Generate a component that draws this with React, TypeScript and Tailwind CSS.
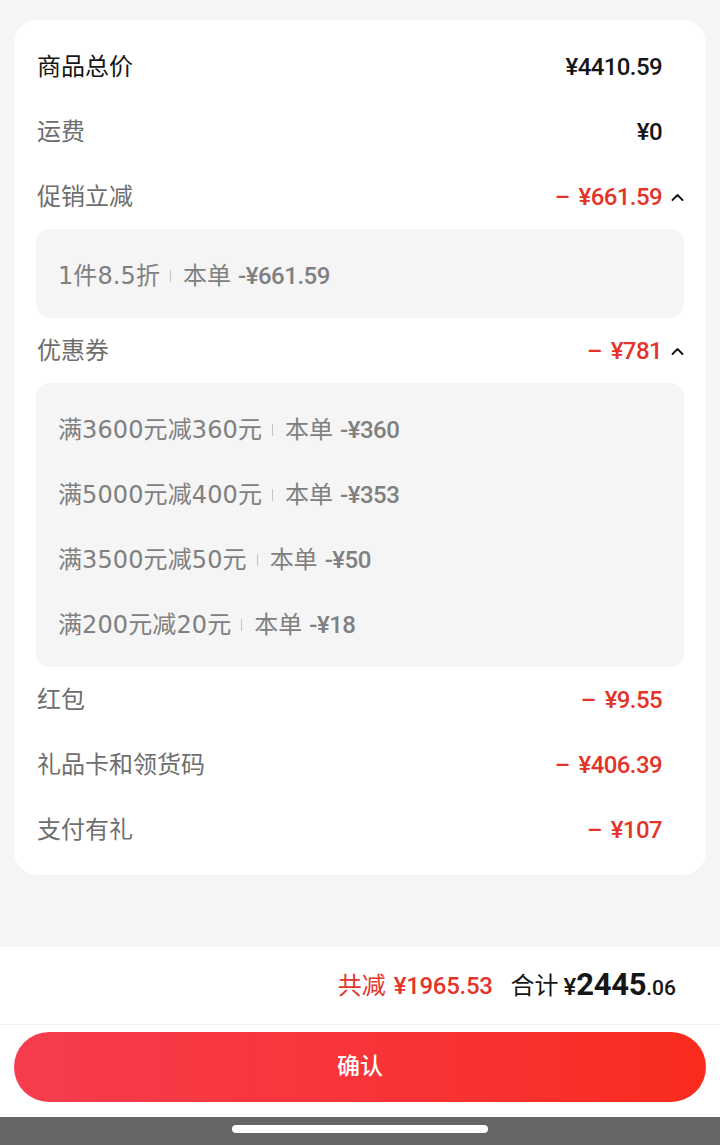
import React from 'react';

const font = { fontFamily: 'Roboto, "Noto Sans CJK SC", sans-serif' };
const ruleFont = { fontFamily: '"DejaVu Sans", "Noto Sans CJK SC", sans-serif' };

function Chevron() {
  return (
    <svg width="13" height="8" viewBox="0 0 13 8" fill="none">
      <polyline points="1.5,7 6.5,2 11.5,7" stroke="#111" strokeWidth="1.8" strokeLinecap="round" strokeLinejoin="round" />
    </svg>
  );
}

function Minus({ amount }: { amount: string }) {
  return (
    <>
      <span>–</span>
      <span className="ml-[9px]">{amount}</span>
    </>
  );
}

function Row({ label, value, red, dark, open }: { label: string; value: string; red?: boolean; dark?: boolean; open?: boolean }) {
  return (
    <div className="h-[65px] flex items-center justify-between pl-[23px] pr-[22px]">
      <span className={`text-[24px] ${dark ? 'text-[#161616]' : 'text-[#6e6e6e]'}`}>{label}</span>
      <div className="flex items-center">
        <span className={`text-[24px] font-medium tracking-[-0.6px] ${red ? 'text-[#e3342a]' : 'text-[#161616]'}`}>
          {red ? <Minus amount={value} /> : value}
        </span>
        <span className="w-[22px] flex justify-end">{open ? <Chevron /> : null}</span>
      </div>
    </div>
  );
}

function Detail({ rule, amount }: { rule: string; amount: string }) {
  return (
    <div className="h-[65px] flex items-center text-[24px] text-[#808080] pt-[4px]">
      <span className="tracking-[0.1px]" style={ruleFont}>{rule}</span>
      <span className="ml-[10px] mr-[12px] w-px h-[12px] bg-[#c4c4c4]" />
      <span>本单</span>
      <span className="ml-[7px] font-medium tracking-[-0.5px]">-¥{amount}</span>
    </div>
  );
}

export default function App() {
  const coupons = [
    { rule: '满3600元减360元', amount: '360' },
    { rule: '满5000元减400元', amount: '353' },
    { rule: '满3500元减50元', amount: '50' },
    { rule: '满200元减20元', amount: '18' },
  ];
  return (
    <div className="h-[1145px] bg-[#f5f5f5] flex flex-col" style={font}>
      <div className="mt-[20px] mx-[14px] bg-white rounded-[24px] pt-[14px] pb-[13px]">
        <Row label="商品总价" value="¥4410.59" dark />
        <Row label="运费" value="¥0" />
        <Row label="促销立减" value="¥661.59" red open />
        <div className="mx-[22px] h-[89px] rounded-[14px] bg-[#f5f5f5] px-[22px] flex items-center">
          <Detail rule="1件8.5折" amount="661.59" />
        </div>
        <Row label="优惠券" value="¥781" red open />
        <div className="mx-[22px] rounded-[14px] bg-[#f5f5f5] px-[22px] py-[12px] flex flex-col">
          {coupons.map((c) => (
            <Detail key={c.rule} rule={c.rule} amount={c.amount} />
          ))}
        </div>
        <Row label="红包" value="¥9.55" red />
        <Row label="礼品卡和领货码" value="¥406.39" red />
        <Row label="支付有礼" value="¥107" red />
      </div>
      <div className="flex-1" />
      <div className="bg-white">
        <div className="h-[78px] flex items-center justify-end pr-[44px] border-b border-[#efefef]">
          <span className="text-[24px] text-[#e3342a]">共减</span>
          <span className="ml-[8px] text-[24px] font-medium tracking-[-0.3px] text-[#e3342a]">¥1965.53</span>
          <span className="ml-[18px] text-[24px] text-[#161616]">合计</span>
          <span className="text-[#161616] ml-[5px] flex items-baseline font-medium">
            <span className="text-[24px]">¥</span>
            <span className="text-[31px] font-bold tracking-[-0.3px]">2445</span>
            <span className="text-[21px]">.06</span>
          </span>
        </div>
        <div className="pt-[7px] pb-[15px] px-[14px]">
          <button className="w-full h-[70px] rounded-full bg-gradient-to-r from-[#f63c4d] to-[#f92b1c] text-white text-[23px] font-medium">
            确认
          </button>
        </div>
      </div>
      <div className="h-[28px] bg-[#666666] flex items-start justify-center pt-[8px]">
        <div className="w-[256px] h-[8px] rounded-full bg-white" />
      </div>
    </div>
  );
}
